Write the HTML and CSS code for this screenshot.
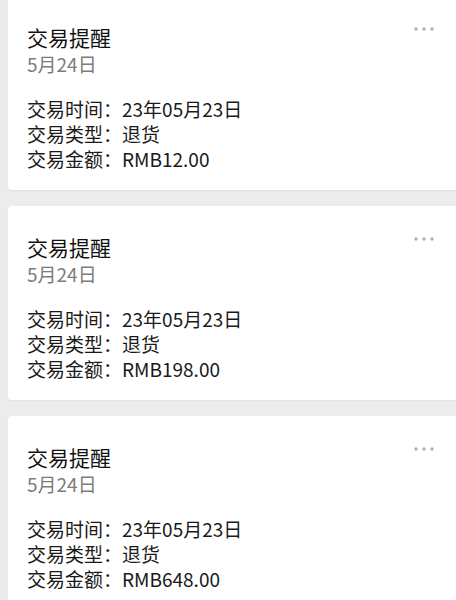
FILE: index.html
```html
<!DOCTYPE html>
<html lang="zh-CN">
<head>
<meta charset="UTF-8" />
<title>交易提醒</title>
<link rel="stylesheet" href="styles.css">
</head>
<body>

<div class="feed">

  <div class="card">
    <div class="card-head">
      <div class="title">交易提醒</div>
      <svg class="more" width="22" height="6" viewBox="0 0 22 6"><circle cx="3" cy="3" r="1.8"/><circle cx="11" cy="3" r="1.8"/><circle cx="19" cy="3" r="1.8"/></svg>
    </div>
    <div class="date">5月24日</div>
    <div class="rows">
      <div class="row">交易时间：23年05月23日</div>
      <div class="row">交易类型：退货</div>
      <div class="row">交易金额：RMB12.00</div>
    </div>
  </div>

  <div class="card">
    <div class="card-head">
      <div class="title">交易提醒</div>
      <svg class="more" width="22" height="6" viewBox="0 0 22 6"><circle cx="3" cy="3" r="1.8"/><circle cx="11" cy="3" r="1.8"/><circle cx="19" cy="3" r="1.8"/></svg>
    </div>
    <div class="date">5月24日</div>
    <div class="rows">
      <div class="row">交易时间：23年05月23日</div>
      <div class="row">交易类型：退货</div>
      <div class="row">交易金额：RMB198.00</div>
    </div>
  </div>

  <div class="card">
    <div class="card-head">
      <div class="title">交易提醒</div>
      <svg class="more" width="22" height="6" viewBox="0 0 22 6"><circle cx="3" cy="3" r="1.8"/><circle cx="11" cy="3" r="1.8"/><circle cx="19" cy="3" r="1.8"/></svg>
    </div>
    <div class="date">5月24日</div>
    <div class="rows">
      <div class="row">交易时间：23年05月23日</div>
      <div class="row">交易类型：退货</div>
      <div class="row">交易金额：RMB648.00</div>
    </div>
  </div>

</div>

</body>
</html>
```

FILE: styles.css
```css
/*―― base ――*/
html, body      { margin: 0; padding: 0; }
body {
  background: #ececec;
  font-family: "Noto Sans CJK SC", "Noto Sans", sans-serif;
  color: #1c1c1c;
  overflow: hidden;
  height: 600px;
}

/*―― list of cards ――*/
.feed {
  display: flex;
  flex-direction: column;
  gap: 16px;
  padding-left: 8px;
  margin-top: -4px;
}

.card {
  width: 452px;
  box-sizing: border-box;
  background: #fff;
  border-radius: 4px;
  box-shadow: 0 1px 2px rgba(0,0,0,.05);
  padding: 27px 20px 19px 19px;
}

.card-head {
  display: flex;
  justify-content: space-between;
  align-items: flex-start;
}
.title          { font-size: 21px; line-height: 28px; color: #111; }
.more           { fill: #b4b4b4; margin-top: 3px; margin-right: 5px; }

.date           { font-size: 19px; line-height: 25px; color: #7c7c7c; }

.rows           { margin-top: 20px; }
.row            { font-size: 19px; line-height: 25px; color: #1a1a1a; }
```
